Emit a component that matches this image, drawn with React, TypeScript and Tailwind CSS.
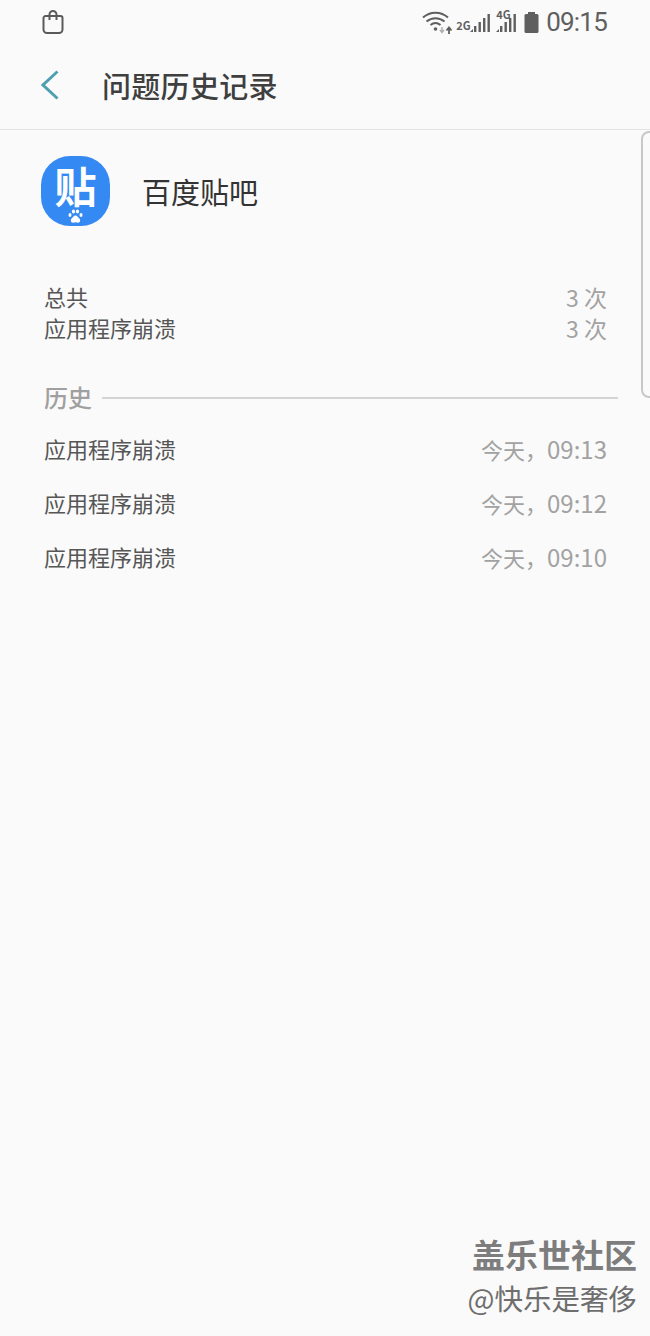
import React from 'react';

const cjk = 'font-["Noto_Sans_CJK_SC","Noto_Sans",sans-serif]';

const BagIcon = () => (
  <svg width="22" height="24" viewBox="0 0 22 24" fill="none" stroke="#5a5a5a" strokeWidth="2">
    <path d="M3.500 6h15a2 2 0 0 1 2 2v11.500a3.500 3.500 0 0 1-3.500 3.500H5a3.500 3.500 0 0 1-3.500-3.500V8a2 2 0 0 1 2-2z" />
    <path d="M7.500 10V4.500a3.500 3.500 0 0 1 7 0V10" />
  </svg>
);

const WifiIcon = () => (
  <svg width="32" height="24" viewBox="0 0 32 24" fill="none">
    <path d="M1 7.500C8 1 19 1 26 7.500" stroke="#5f5f5f" strokeWidth="2" />
    <path d="M4.500 11.500C10 7 17 7 22.500 11.500" stroke="#5f5f5f" strokeWidth="2" />
    <path d="M8.500 15c3-2.500 7-2.500 10 0" stroke="#5f5f5f" strokeWidth="2" />
    <circle cx="13.500" cy="19" r="1.800" fill="#5f5f5f" />
    <path d="M20 17v5M18 20l2 2.500 2-2.500" stroke="#b0b0b0" strokeWidth="1.500" />
    <path d="M27 24v-6M24.500 20.500l2.500-3 2.500 3" stroke="#5f5f5f" strokeWidth="1.800" />
  </svg>
);

const SignalBars = () => (
  <svg width="21" height="20" viewBox="0 0 21 20" fill="#5f5f5f">
    <path d="M0 19l3-3v3z" />
    <rect x="4" y="13" width="2.400" height="6" />
    <rect x="8.500" y="9" width="2.400" height="10" />
    <rect x="13" y="5" width="2.400" height="14" />
    <rect x="17.500" y="1" width="2.400" height="18" />
  </svg>
);

const BatteryIcon = () => (
  <svg width="15" height="21" viewBox="0 0 15 21" fill="#5f5f5f">
    <rect x="4" y="0" width="7" height="2.500" />
    <rect x="0.500" y="2" width="14" height="19" rx="1.500" />
  </svg>
);

const PawIcon = () => (
  <svg width="15" height="15" viewBox="0 0 15 15" fill="#fff">
    <ellipse cx="2" cy="6" rx="1.500" ry="1.900" />
    <ellipse cx="5.500" cy="2.500" rx="1.600" ry="2" />
    <ellipse cx="9.500" cy="2.500" rx="1.600" ry="2" />
    <ellipse cx="13" cy="6" rx="1.500" ry="1.900" />
    <path d="M7.500 6.500c-2 0-2.500 2-3.800 3-1.500 1.200-1 4.200 1.300 4.200 1 0 1.600-.4 2.500-.4s1.500.4 2.500.4c2.300 0 2.800-3 1.300-4.200-1.300-1-1.800-3-3.800-3z" />
  </svg>
);

const StatRow = ({ label, value }: { label: string; value: string }) => (
  <div className="flex h-[31px] items-center justify-between">
    <span className="-mt-[2px] text-[22px] leading-[27px] text-[#565656]">{label}</span>
    <span className="text-[23px] leading-[29px] text-[#a2a2a2]">{value}</span>
  </div>
);

const HistoryRow = ({ time }: { time: string }) => (
  <div className="flex h-[54px] items-center justify-between">
    <span className="text-[22px] leading-[27px] text-[#565656]">应用程序崩溃</span>
    <span className="mt-[4px] leading-[29px] text-[#a2a2a2]">
      <span className="text-[22px]">今天，</span>
      <span className="text-[24px]">{time}</span>
    </span>
  </div>
);

export default function App() {
  return (
    <div className={`relative flex h-[1336px] w-[650px] flex-col overflow-hidden bg-[#fafafa] ${cjk}`}>
      <div className="flex h-[44px] items-center justify-between pl-[42px] pr-[43px]">
        <BagIcon />
        <div className="flex items-center">
          <WifiIcon />
          <span className="ml-[2px] mt-[6px] w-[13px] whitespace-nowrap text-[11px] font-bold leading-none text-[#5f5f5f]">
            2G
          </span>
          <div className="ml-[1px] mt-[1px] flex">
            <SignalBars />
          </div>
          <div className="relative ml-[5px] h-[22px] w-[22px]">
            <span className="absolute left-0 top-[-2px] text-[11px] font-bold leading-none text-[#5f5f5f]">4G</span>
            <div className="absolute left-0 top-[2px]">
              <SignalBars />
            </div>
          </div>
          <div className="ml-[6px] flex">
            <BatteryIcon />
          </div>
          <span className="ml-[7px] font-['Roboto',sans-serif] text-[26px] leading-none tracking-[-0.8px] text-[#5f5f5f]">
            09:15
          </span>
        </div>
      </div>

      <div className="flex h-[86px] items-center border-b border-[#e3e3e3] pb-[3px] pl-[41px]">
        <svg width="18" height="30" viewBox="0 0 18 30" fill="none" stroke="#4f9fb0" strokeWidth="3">
          <path d="M16.500 1.500L2 15l14.500 13.500" />
        </svg>
        <h1 className="ml-[43px] text-[29px] font-medium leading-none tracking-[0.3px] text-[#3f3f3f]">问题历史记录</h1>
      </div>

      <div className="mt-[26px] flex items-center pl-[41px]">
        <div className="relative flex h-[70px] w-[69px] justify-center rounded-[29px] bg-[#3589f2]">
          <span className="mt-[4px] text-[42px] font-bold leading-[50px] text-white">贴</span>
          <div className="absolute bottom-[2px] left-[27px]">
            <PawIcon />
          </div>
        </div>
        <span className="ml-[32px] text-[29px] leading-none text-[#333333]">百度贴吧</span>
      </div>

      <div className="mt-[56px] pl-[44px] pr-[43px]">
        <StatRow label="总共" value="3 次" />
        <StatRow label="应用程序崩溃" value="3 次" />
      </div>

      <div className="mt-[39px] flex h-[30px] items-center pl-[44px] pr-[32px]">
        <span className="-mt-[3px] text-[24px] font-medium leading-[30px] text-[#a0a0a0]">历史</span>
        <div className="ml-[10px] h-[2px] flex-1 bg-[#d4d4d4]" />
      </div>

      <div className="mt-[8px] pl-[44px] pr-[43px]">
        <HistoryRow time="09:13" />
        <HistoryRow time="09:12" />
        <HistoryRow time="09:10" />
      </div>

      {/* edge panel handle */}
      <div className="absolute left-[641px] top-[131px] h-[267px] w-[20px] rounded-l-[8px] border-2 border-[#c8c8c8]" />

      {/* watermark */}
      <div className="absolute right-[13px] top-[1235px] flex flex-col items-end">
        <span className="text-[33px] font-bold leading-[38px] text-[#7d7d7d]">盖乐世社区</span>
        <span className="mt-[6px] text-[28.5px] leading-[38px] text-[#6e6e6e]">@快乐是奢侈</span>
      </div>
    </div>
  );
}
